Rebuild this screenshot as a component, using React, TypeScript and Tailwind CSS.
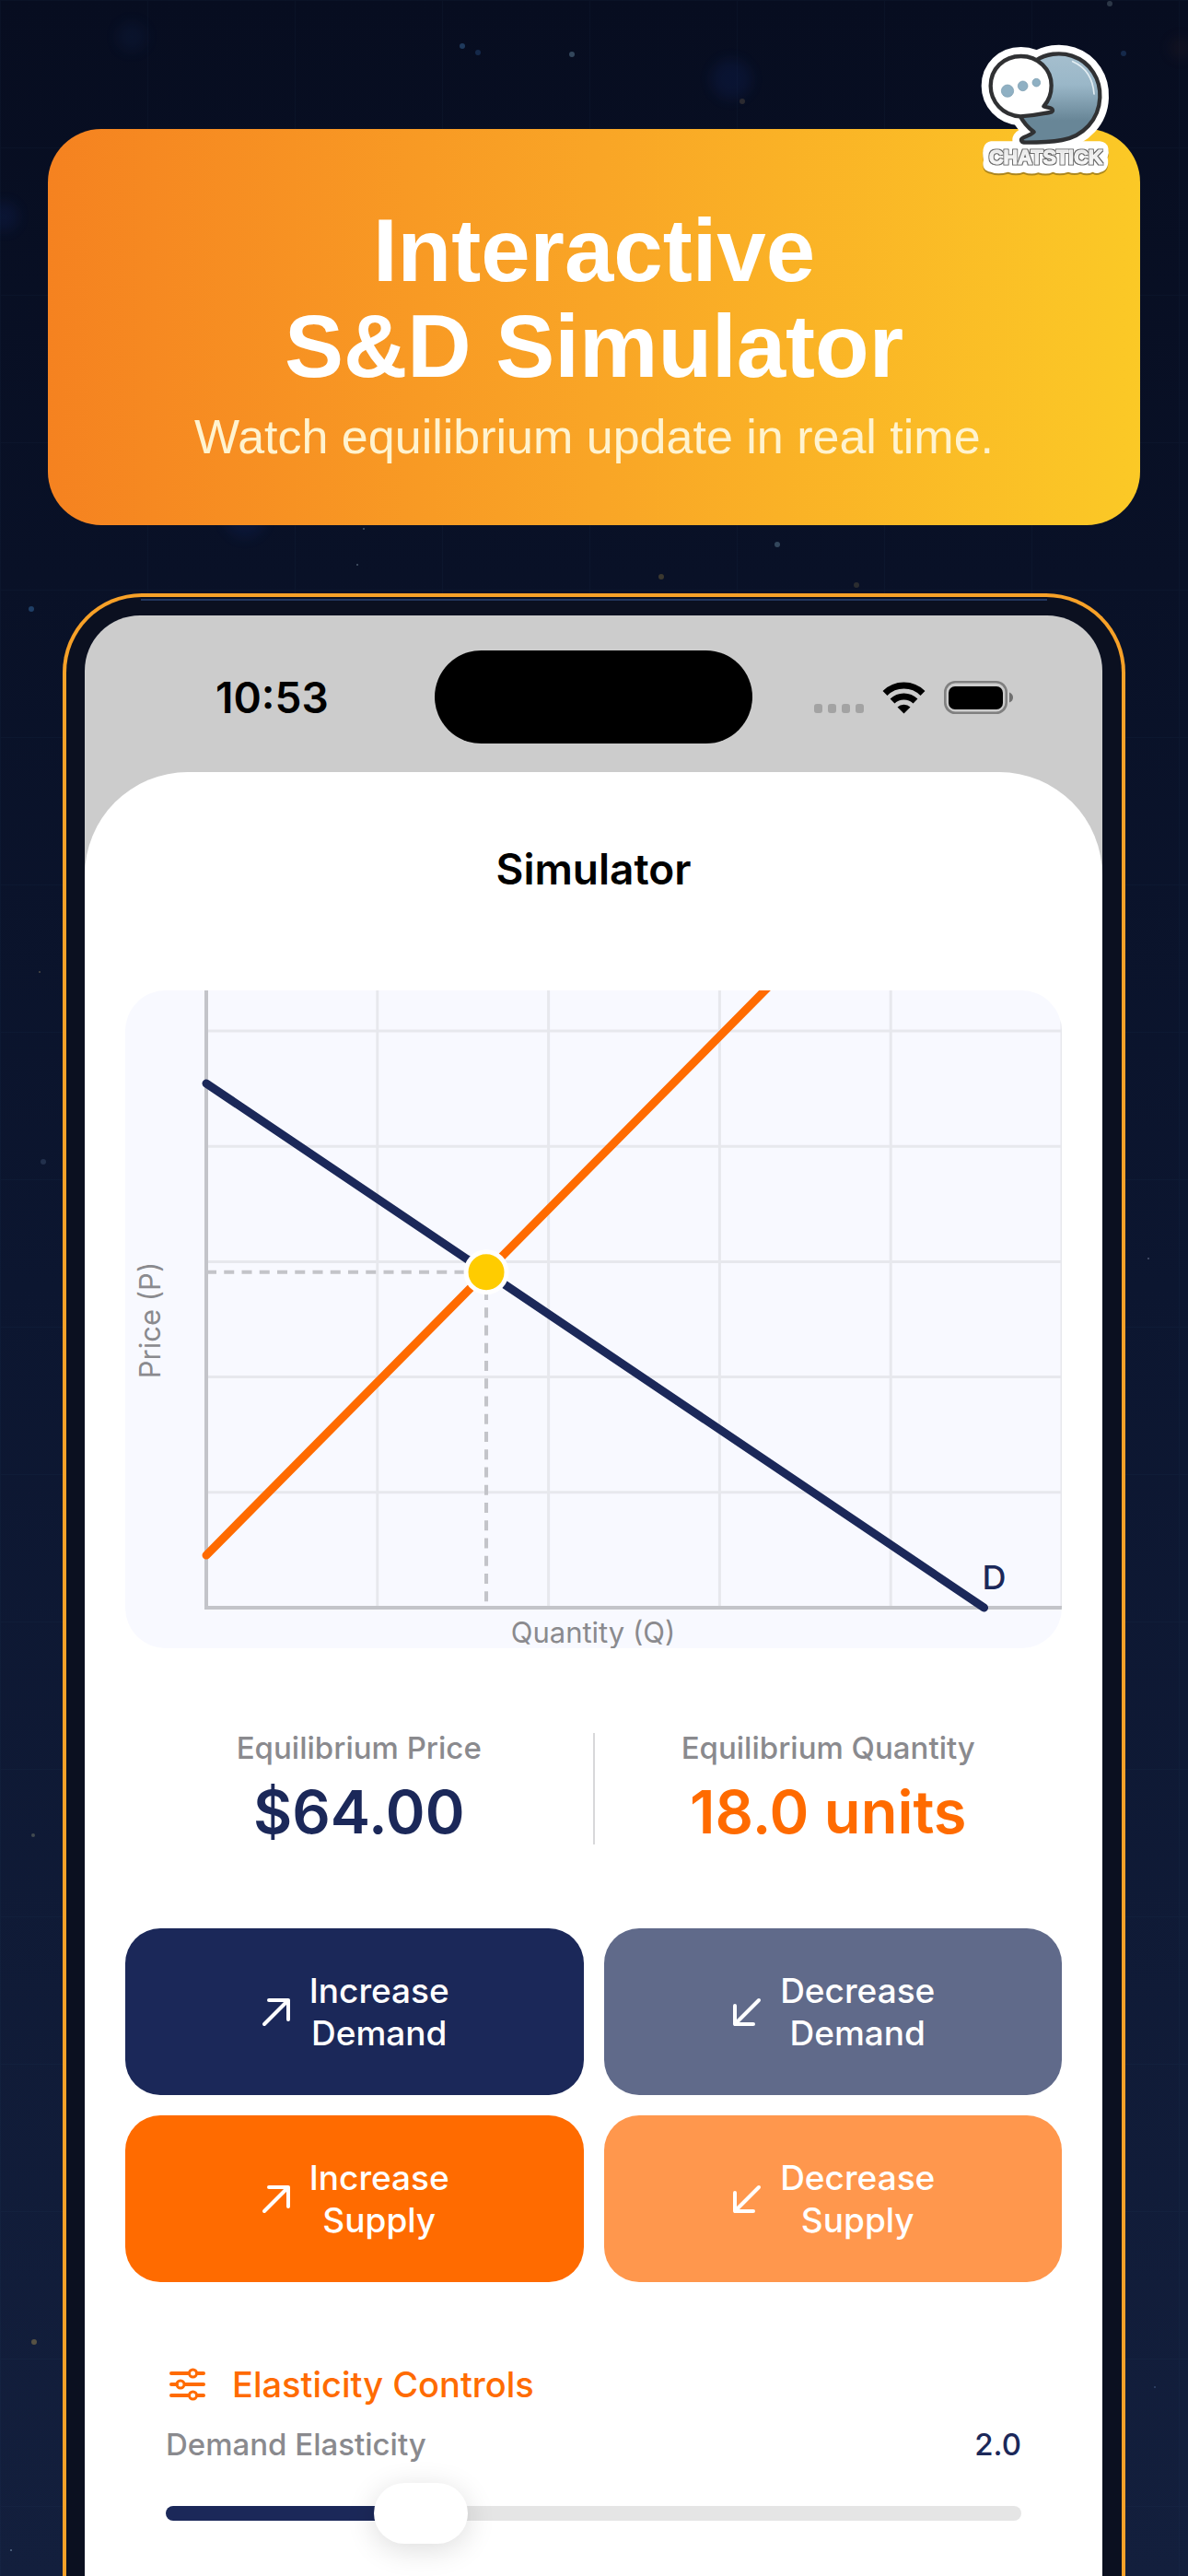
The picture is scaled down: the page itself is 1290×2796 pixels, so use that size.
import { useId, useState } from "react";
import type { CSSProperties } from "react";

const NAVY = "#1b2859";
const ORANGE = "#ff6b00";

const MAX_Q = 55;
const MAX_P = 110;
const SUPPLY_SLOPE = 3;

// Chart geometry, in viewBox units
const ORIGIN_X = 88;
const ORIGIN_Y = 670;
const PLOT_W = 929;
const PLOT_H = 626;

const toX = (q: number) => ORIGIN_X + (q / MAX_Q) * PLOT_W;
const toY = (p: number) => ORIGIN_Y - (p / MAX_P) * PLOT_H;

interface Star { x: number; y: number; r: number; color: string }

const STARS: Star[] = [
  { x: 1205, y: 4, r: 3, color: "#2c3747" },
  { x: 502, y: 50, r: 3, color: "#1f3a5c" },
  { x: 519, y: 57, r: 3, color: "#15294a" },
  { x: 621, y: 59, r: 3, color: "#33475c" },
  { x: 806, y: 110, r: 3, color: "#2b2a30" },
  { x: 1220, y: 58, r: 3, color: "#15294a" },
  { x: 395, y: 574, r: 1, color: "#4a5a6c" },
  { x: 388, y: 613, r: 1, color: "#4a5a6c" },
  { x: 844, y: 591, r: 3, color: "#33475c" },
  { x: 718, y: 626, r: 3, color: "#3b382f" },
  { x: 930, y: 635, r: 3, color: "#2b2d30" },
  { x: 34, y: 661, r: 3, color: "#1f3f66" },
  { x: 43, y: 1055, r: 1, color: "#4d4b45" },
  { x: 47, y: 1261, r: 3, color: "#22304c" },
  { x: 36, y: 1992, r: 2, color: "#424a50" },
  { x: 37, y: 2542, r: 3, color: "#575244" },
  { x: 12, y: 2768, r: 1, color: "#5b708c" },
  { x: 1247, y: 1366, r: 1, color: "#4c5670" },
  { x: 1254, y: 2591, r: 1, color: "#33476c" },
];

const GLOWS: Star[] = [
  { x: 143, y: 40, r: 16, color: "#123066" },
  { x: 794, y: 86, r: 22, color: "#12348a" },
  { x: 1282, y: 52, r: 12, color: "#4a2c20" },
  { x: 4, y: 235, r: 16, color: "#12348a" },
  { x: 266, y: 562, r: 22, color: "#12348a" },
];

function NightSky() {
  return (
    <svg className="absolute inset-0 size-full" aria-hidden="true">
      <defs>
        <pattern id="grid" width="160" height="160" patternUnits="userSpaceOnUse">
          <path d="M160 .5H.5V160" fill="none" stroke="#3a78a0" strokeOpacity=".05" />
        </pattern>
        <filter id="soft" x="-100%" y="-100%" width="300%" height="300%">
          <feGaussianBlur stdDeviation="7" />
        </filter>
      </defs>
      <rect width="100%" height="100%" fill="url(#grid)" />
      {GLOWS.map((g) => (
        <circle key={g.x} cx={g.x} cy={g.y} r={g.r} fill={g.color} opacity=".16" filter="url(#soft)" />
      ))}
      {STARS.map((s) => (
        <circle key={s.x + "-" + s.y} cx={s.x} cy={s.y} r={s.r} fill={s.color} />
      ))}
    </svg>
  );
}

const BACK_BUBBLE =
  "M256 106C285 86 332 78 372 92C432 112 466 168 463 228C460 300 408 354 340 366C300 373 250 374 222 374C206 374 202 364 214 358C230 352 242 346 248 340C232 328 212 306 202 286Z";
const FRONT_BUBBLE =
  "M206 93C262 93 305 136 305 188C305 215 296 238 280 256C288 260 300 260 306 264C312 270 308 276 300 276C280 278 262 286 204 289C146 286 107 240 107 190C107 134 150 93 206 93Z";
const LABEL_PLATE =
  "M108 370H462Q486 372 490 392Q494 408 488 422Q496 462 466 470Q452 478 440 470Q420 480 400 470Q380 478 360 470Q330 480 310 470Q290 480 262 472Q240 480 214 470Q190 480 164 470Q130 480 108 470Q76 466 84 432Q74 376 108 370Z";

function ChatstickLogo() {
  return (
    <svg viewBox="0 0 570 510" className="absolute -top-[110px] right-2 w-[190px]" role="img" aria-label="Chatstick">
      <defs>
        <linearGradient id="bubble" x1="0" y1="0" x2="0" y2="1">
          <stop offset="0" stopColor="#a5bfce" />
          <stop offset=".35" stopColor="#9ab7c8" />
          <stop offset=".75" stopColor="#688697" />
          <stop offset="1" stopColor="#688697" />
        </linearGradient>
        <linearGradient id="letters" x1="0" y1="0" x2="0" y2="1">
          <stop offset="0" stopColor="#dedede" />
          <stop offset="1" stopColor="#ffffff" />
        </linearGradient>
        <filter id="outline" x="-5%" y="-20%" width="110%" height="140%">
          <feMorphology in="SourceAlpha" operator="dilate" radius="2" result="fat" />
          <feFlood floodColor="#6a6a6a" />
          <feComposite in2="fat" operator="in" />
          <feMerge>
            <feMergeNode />
            <feMergeNode in="SourceGraphic" />
          </feMerge>
        </filter>
      </defs>

      {/* White sticker outline */}
      <g fill="#fff" stroke="#fff" strokeLinejoin="round">
        <path d={BACK_BUBBLE} strokeWidth="58" />
        <path d={FRONT_BUBBLE} strokeWidth="60" />
      </g>
      <path d={LABEL_PLATE} fill="#6b5518" opacity=".55" transform="translate(0 6)" />
      <path d={LABEL_PLATE} fill="#fff" />

      <path d={BACK_BUBBLE} fill="url(#bubble)" stroke="#303133" strokeWidth="13" strokeLinejoin="round" />
      <path d="M374 110C415 128 440 160 444 216" fill="none" stroke="#e4eef3" strokeWidth="5" strokeLinecap="round" />
      <path d={FRONT_BUBBLE} fill="#fff" stroke="#303133" strokeWidth="13" strokeLinejoin="round" />
      <g fill="#8fb0c3" stroke="#7598ac" strokeWidth="2">
        <circle cx="162" cy="206" r="20" />
        <circle cx="212" cy="190" r="16" />
        <circle cx="256" cy="179" r="13" />
      </g>

      <text
        x="287"
        y="443"
        textAnchor="middle"
        fontSize="65"
        fontWeight="700"
        fill="url(#letters)"
        stroke="#f6f6f6"
        strokeWidth="3"
        strokeLinejoin="round"
        filter="url(#outline)"
        className="font-['Liberation_Sans',sans-serif]"
      >
        CHATSTICK
      </text>
    </svg>
  );
}

function StatusBar() {
  return (
    <div className="grid grid-cols-[1fr_auto_1fr] items-center pt-[38px] pb-[31px]">
      <span className="pl-[142px] text-[46px] leading-[56px] font-semibold text-black">10:53</span>
      <div className="h-[101px] w-[345px] rounded-full bg-black" />
      <div className="flex items-end justify-end gap-5 pr-24">
        <svg viewBox="0 0 54 36" className="w-[54px]" fill="#a3a3a3" aria-hidden="true">
          <rect x="0" y="25" width="9" height="10" rx="3" />
          <rect x="15" y="25" width="9" height="10" rx="3" />
          <rect x="30" y="25" width="9" height="10" rx="3" />
          <rect x="45" y="25" width="9" height="10" rx="3" />
        </svg>
        <svg viewBox="0 0 47 36" className="w-[47px]" aria-hidden="true">
          <g fill="none" stroke="#000" strokeWidth="7">
            <path d="M3 13.5A29 29 0 0 1 44 13.5" />
            <path d="M11 22A18 18 0 0 1 36 22" />
          </g>
          <path d="M16.5 28.5A10 10 0 0 1 30.5 28.5L23.5 35.5Z" />
        </svg>
        <svg viewBox="0 0 76 36" className="w-[76px]" aria-hidden="true">
          <rect x="1.3" y="1.3" width="66.4" height="33.4" rx="11" fill="none" stroke="#808080" strokeWidth="2.6" />
          <rect x="5" y="6" width="59" height="25" rx="7" />
          <path d="M71 12.5Q75 14 75 18T71 23.5Z" fill="#707070" />
        </svg>
      </div>
    </div>
  );
}

interface ChartProps { demandTop: number; demandSlope: number; supplyBase: number; q: number; p: number }

function Chart({ demandTop, demandSlope, supplyBase, q, p }: ChartProps) {
  const dEnd = demandTop / demandSlope;
  const lines = [1, 2, 3, 4, 5];

  return (
    <svg
      viewBox="0 0 1017 714"
      className="mt-[104px] w-full rounded-[44px] bg-[#f8f9ff]"
      role="img"
      aria-label="Supply and demand chart"
    >
      <g stroke="#e7e8ed" strokeWidth="3">
        {lines.map((i) => (
          <line key={"v" + i} x1={ORIGIN_X + (i * PLOT_W) / 5} x2={ORIGIN_X + (i * PLOT_W) / 5} y1="0" y2={ORIGIN_Y} />
        ))}
        {lines.map((i) => (
          <line key={"h" + i} x1={ORIGIN_X} x2="1017" y1={ORIGIN_Y - (i * PLOT_H) / 5} y2={ORIGIN_Y - (i * PLOT_H) / 5} />
        ))}
      </g>
      <path d={`M${ORIGIN_X} 0V${ORIGIN_Y}H1017`} fill="none" stroke="#c3c4c9" strokeWidth="4" />

      <g stroke="#c3c4c9" strokeWidth="4" strokeDasharray="11 8.25">
        <line x1={ORIGIN_X} y1={toY(p)} x2={toX(q)} y2={toY(p)} />
        <line x1={toX(q)} y1={toY(p)} x2={toX(q)} y2={ORIGIN_Y} />
      </g>

      <g strokeWidth="9" strokeLinecap="round">
        <line x1={toX(0)} y1={toY(demandTop)} x2={toX(dEnd)} y2={toY(0)} stroke={NAVY} />
        <line x1={toX(0)} y1={toY(supplyBase)} x2={toX(MAX_Q)} y2={toY(supplyBase + SUPPLY_SLOPE * MAX_Q)} stroke={ORANGE} />
      </g>
      <circle cx={toX(q)} cy={toY(p)} r="22" fill="#ffcc00" stroke="#fff" strokeWidth="5" />

      <text x={toX(dEnd) + 11} y="650" textAnchor="middle" fontSize="36" fontWeight="500" fill={NAVY}>D</text>
      <g fontSize="31" fill="#8a8a8e" textAnchor="middle">
        <text x="508" y="708">Quantity (Q)</text>
        <text x="0" y="0" transform="translate(38 358) rotate(-90)">Price (P)</text>
      </g>
    </svg>
  );
}

function Stat({ label, value, color }: { label: string; value: string; color: string }) {
  return (
    <div className="flex flex-1 flex-col items-center gap-3">
      <dt className="text-[33px] leading-10 font-medium text-[#8a8a8e]">{label}</dt>
      <dd className={`text-[65px] leading-[76px] font-semibold ${color}`}>{value}</dd>
    </div>
  );
}

interface ShiftButtonProps { up?: boolean; verb: string; noun: string; color: string; onClick: () => void }

function ShiftButton({ up, verb, noun, color, onClick }: ShiftButtonProps) {
  return (
    <button
      type="button"
      onClick={onClick}
      className={`flex h-[181px] cursor-pointer items-center justify-center gap-[18px] rounded-[38px] text-[37px] leading-[46px] font-medium text-white ${color}`}
    >
      <svg
        viewBox="0 0 36 36"
        className="w-9"
        fill="none"
        stroke="currentColor"
        strokeWidth="4"
        strokeLinecap="round"
        strokeLinejoin="round"
        aria-hidden="true"
      >
        <path d={up ? "M5 31L31 5M10 5H31V26" : "M31 5L5 31M5 11V31H25"} />
      </svg>
      <span>
        {verb}
        <br />
        {noun}
      </span>
    </button>
  );
}

function SlidersIcon() {
  return (
    <svg viewBox="0 0 46 36" className="w-[46px]" fill="none" stroke={ORANGE} strokeWidth="4" strokeLinecap="round" aria-hidden="true">
      <path d="M6 6H25M34 6H41M6 18H12M21 18H41M6 30H25M34 30H41" />
      <g strokeWidth="3">
        <circle cx="29.5" cy="6" r="4" />
        <circle cx="16" cy="18" r="4" />
        <circle cx="29.5" cy="30" r="4" />
      </g>
    </svg>
  );
}

const ELASTICITY_MIN = 0.5;
const ELASTICITY_MAX = 6;

export default function App() {
  const [demandTop, setDemandTop] = useState(100);
  const [supplyBase, setSupplyBase] = useState(10);
  const [elasticity, setElasticity] = useState(2);
  const sliderId = useId();

  const q = Math.max(0, (demandTop - supplyBase) / (elasticity + SUPPLY_SLOPE));
  const p = supplyBase + SUPPLY_SLOPE * q;
  const fill = ((elasticity - ELASTICITY_MIN) / (ELASTICITY_MAX - ELASTICITY_MIN)) * 100;

  return (
    <main className="relative flex min-h-screen flex-col overflow-hidden bg-linear-to-b from-[#070d20] via-[#0c1630] to-[#131f3d] pt-[140px] font-['Inter','Liberation_Sans',sans-serif]">
      <NightSky />

      {/* Banner */}
      <header className="relative mx-[52px] rounded-[58px] bg-linear-to-r from-[#f58220] via-[#f9a526] to-[#fbc926] pt-20 pb-16 text-center font-['Liberation_Sans',Arial,sans-serif]">
        <h1 className="text-[96px] leading-[104px] font-bold text-white">
          Interactive
          <br />
          S&amp;D Simulator
        </h1>
        <p className="mt-3.5 text-[52px] leading-16 text-[#fff3cf]">Watch equilibrium update in real time.</p>
        <ChatstickLogo />
      </header>

      {/* Phone */}
      <div className="relative mx-[68px] mt-[74px] flex flex-1 flex-col rounded-t-[86px] border-4 border-b-0 border-[#f7a128] bg-[#0b1020] pt-5 pr-[21px] pl-5">
        <div className="absolute inset-x-[81px] top-0.5 h-0.5 bg-[#22375f]" />
        <div className="flex flex-1 flex-col overflow-hidden rounded-t-[60px] bg-[#cccccc]">
          <StatusBar />

          <section className="flex-1 rounded-t-[112px] bg-white px-11 pt-[77px]">
            <h2 className="text-center text-[46px] leading-[56px] font-semibold text-black">Simulator</h2>

            <Chart demandTop={demandTop} demandSlope={elasticity} supplyBase={supplyBase} q={q} p={p} />

            <dl className="mt-[88px] flex items-center">
              <Stat label="Equilibrium Price" value={`$${p.toFixed(2)}`} color="text-[#1b2859]" />
              <div className="h-[121px] w-0.5 bg-[#d8d8da]" />
              <Stat label="Equilibrium Quantity" value={`${q.toFixed(1)} units`} color="text-[#ff6b00]" />
            </dl>

            <div className="mt-[88px] grid grid-cols-2 gap-[22px]">
              <ShiftButton up verb="Increase" noun="Demand" color="bg-[#1b2859]" onClick={() => setDemandTop((v) => v + 5)} />
              <ShiftButton verb="Decrease" noun="Demand" color="bg-[#606a8a]" onClick={() => setDemandTop((v) => v - 5)} />
              <ShiftButton up verb="Increase" noun="Supply" color="bg-[#ff6b00]" onClick={() => setSupplyBase((v) => v - 5)} />
              <ShiftButton verb="Decrease" noun="Supply" color="bg-[#ff974d]" onClick={() => setSupplyBase((v) => v + 5)} />
            </div>

            {/* Elasticity */}
            <div className="mt-[88px] flex flex-col gap-[22px] px-11 pb-9">
              <h3 className="flex items-center gap-[26px] text-[38px] leading-[46px] font-medium text-[#ff6b00]">
                <SlidersIcon />
                Elasticity Controls
              </h3>
              <div className="flex justify-between text-[33px] leading-10 font-medium">
                <label htmlFor={sliderId} className="text-[#8a8a8e]">Demand Elasticity</label>
                <output htmlFor={sliderId} className="text-[#1b2859]">{elasticity.toFixed(1)}</output>
              </div>
              <input
                id={sliderId}
                type="range"
                min={ELASTICITY_MIN}
                max={ELASTICITY_MAX}
                step={0.1}
                value={elasticity}
                onChange={(e) => setElasticity(Number(e.target.value))}
                style={{ "--fill": `${fill}%` } as CSSProperties}
                className="h-[66px] w-full cursor-pointer appearance-none bg-transparent [&::-webkit-slider-runnable-track]:h-4 [&::-webkit-slider-runnable-track]:rounded-full [&::-webkit-slider-runnable-track]:bg-[linear-gradient(to_right,#1b2859_var(--fill),#e5e5e5_var(--fill))] [&::-webkit-slider-thumb]:-mt-[25px] [&::-webkit-slider-thumb]:h-[66px] [&::-webkit-slider-thumb]:w-[102px] [&::-webkit-slider-thumb]:appearance-none [&::-webkit-slider-thumb]:rounded-full [&::-webkit-slider-thumb]:bg-white [&::-webkit-slider-thumb]:shadow-[0_6px_32px_rgba(0,0,0,0.14)]"
              />
            </div>
          </section>
        </div>
      </div>
    </main>
  );
}
